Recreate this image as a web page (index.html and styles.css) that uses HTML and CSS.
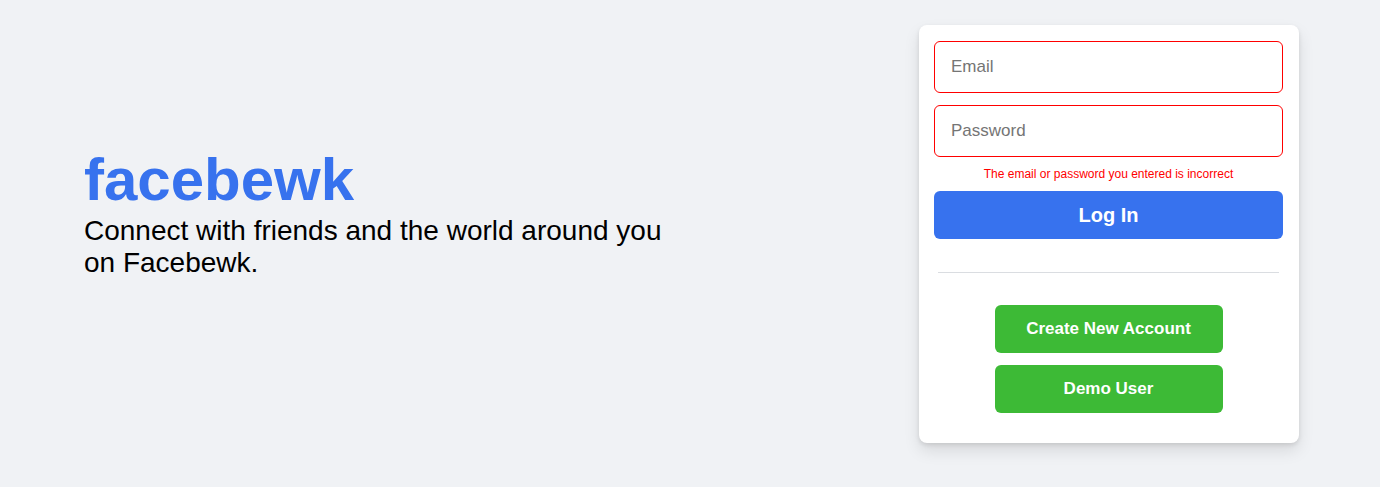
FILE: index.html
```html
<!DOCTYPE html>
<html lang="en">
<head>
<meta charset="utf-8">
<title>facebewk</title>
<link rel="stylesheet" href="styles.css">
</head>
<body>
<main class="page">
  <section class="brand">
    <h1 class="logo">facebewk</h1>
    <p class="tagline">Connect with friends and the world around you on Facebewk.</p>
  </section>
  <section class="card">
    <form class="login-form">
      <input class="field field-error" type="text" placeholder="Email">
      <input class="field field-error" type="password" placeholder="Password">
      <p class="error-msg">The email or password you entered is incorrect</p>
      <button class="btn btn-login" type="button">Log In</button>
    </form>
    <hr class="divider">
    <div class="actions">
      <button class="btn btn-green" type="button">Create New Account</button>
      <button class="btn btn-green" type="button">Demo User</button>
    </div>
  </section>
</main>
</body>
</html>
```

FILE: styles.css
```css
* { box-sizing: border-box; }

html, body {
  margin: 0;
  padding: 0;
}

body {
  background: #f0f2f5;
  font-family: "Liberation Sans", Arial, sans-serif;
  color: #000;
  min-height: 487px;
}

.page {
  display: flex;
  justify-content: space-between;
  align-items: center;
  padding: 25px 81px 0 84px;
}

.brand {
  width: 600px;
  padding-bottom: 44px;
}

.logo {
  margin: 0;
  font-size: 60px;
  font-weight: 700;
  line-height: 69px;
  color: #3772ee;
}

.tagline {
  margin: 1px 0 0;
  font-size: 28px;
  line-height: 32px;
  font-weight: 400;
}

.card {
  width: 380px;
  background: #fff;
  border-radius: 8px;
  box-shadow: 0 2px 4px rgba(0, 0, 0, 0.1), 0 8px 16px rgba(0, 0, 0, 0.1);
  padding: 16px 16px 30px 15px;
}

.login-form {
  display: flex;
  flex-direction: column;
  gap: 12px;
}

.field {
  width: 100%;
  height: 52px;
  border: 1px solid #e4e6eb;
  border-radius: 6px;
  padding: 0 16px;
  font-family: "Liberation Sans", Arial, sans-serif;
  font-size: 17px;
  color: #1c1e21;
  outline: none;
  background: #fff;
}

.field::placeholder {
  color: #757575;
}

.field-error {
  border-color: #ff0000;
}

.error-msg {
  margin: -2px 0 -2px;
  text-align: center;
  font-size: 12px;
  line-height: 14px;
  color: #ff0000;
}

.btn {
  border: none;
  border-radius: 6px;
  color: #fff;
  font-family: "Liberation Sans", Arial, sans-serif;
  font-weight: 700;
  cursor: pointer;
}

.btn-login {
  width: 100%;
  height: 48px;
  background: #3772ee;
  font-size: 20px;
}

.divider {
  margin: 33px 4px 32px;
  border: none;
  border-top: 1px solid #dadde1;
  height: 0;
}

.actions {
  display: flex;
  flex-direction: column;
  align-items: center;
  gap: 12px;
}

.btn-green {
  width: 228px;
  height: 48px;
  background: #3dba36;
  font-size: 17px;
}
```
